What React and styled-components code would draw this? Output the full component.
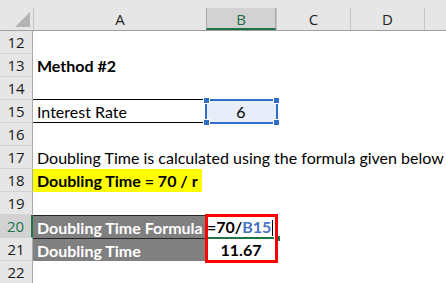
import React from 'react'
import styled, { createGlobalStyle, css } from 'styled-components'

const GlobalStyle = createGlobalStyle`
  html, body {
    margin: 0;
    padding: 0;
    background: #ffffff;
  }
  body {
    width: 446px;
    height: 283px;
    overflow: hidden;
  }
`;

const widths = { head: 33, A: 173, B: 70, C: 74, D: 74 };

const Sheet = styled.div`
  width: 446px;
  height: 283px;
  overflow: hidden;
  background: #ffffff;
  font-family: Lato, 'Liberation Sans', sans-serif;
`;

const HeaderRow = styled.div`
  display: flex;
  align-items: flex-end;
  height: 30px;
  background: #e6e6e6;
  border-bottom: 1px solid #9f9f9f;
`;

const Corner = styled.div`
  width: ${widths.head}px;
  height: 30px;
  flex: none;
  display: flex;
  align-items: flex-end;
  justify-content: flex-end;
  padding: 0 3px 3px 0;
  box-sizing: border-box;
`;

const ColHead = styled.div`
  width: ${(p) => p.$w}px;
  height: 22px;
  flex: none;
  box-sizing: border-box;
  display: flex;
  align-items: center;
  justify-content: center;
  border-left: 1px solid #c4c4c4;
  font-family: 'Open Sans', 'Noto Sans', sans-serif;
  font-size: 15px;
  color: #222;
  ${(p) =>
    p.$active &&
    css`
      background: #d2d2d2;
      color: #1e6b40;
      border-left-color: #a9a9a9;
      border-right: 1px solid #a9a9a9;
      border-bottom: 2px solid #217346;
      padding-top: 2px;
    `}
`;

const Row = styled.div`
  display: flex;
  height: 23px;
`;

const RowHead = styled.div`
  width: ${widths.head}px;
  flex: none;
  box-sizing: border-box;
  background: #e6e6e6;
  border-right: 1px solid #ababab;
  border-bottom: 1px solid #d2d2d2;
  display: flex;
  align-items: center;
  justify-content: center;
  font-family: 'Open Sans', 'Noto Sans', sans-serif;
  font-size: 15px;
  color: #1a1a1a;
  ${(p) =>
    p.$active &&
    css`
      background: #d2d2d2;
      color: #217346;
      border-right: 2px solid #217346;
    `}
`;

const Cell = styled.div`
  position: relative;
  width: ${(p) => p.$w}px;
  flex: none;
  box-sizing: border-box;
  display: flex;
  align-items: center;
  justify-content: ${(p) => (p.$center ? 'center' : 'flex-start')};
  padding: 0 4px;
  font-size: 16px;
  font-weight: ${(p) => (p.$bold ? 700 : 400)};
  color: #000;
  white-space: nowrap;
  overflow: visible;
  ${(p) =>
    p.$ruled &&
    css`
      border-top: 1px solid #000;
      border-bottom: 1px solid #000;
      margin-top: -1px;
      height: 24px;
    `}
  ${(p) =>
    p.$fill &&
    css`
      background: ${p.$fill};
    `}
  ${(p) =>
    p.$dark &&
    css`
      background: #808080;
      color: #ffffff;
      border-top: 1px solid #262626;
    `}
`;

const Highlight = styled.span`
  display: inline-block;
  background: #ffff00;
  height: 23px;
  line-height: 23px;
  width: 169px;
  margin-left: -4px;
  padding-left: 4px;
  box-sizing: border-box;
`;

const Selection = styled.div`
  position: absolute;
  left: -1px;
  top: -1px;
  right: -2px;
  bottom: -1px;
  border: 2px solid #2f6dc6;
  background: #e8eef9;
  z-index: 0;
`;

const Handle = styled.span`
  position: absolute;
  width: 5px;
  height: 5px;
  background: #2f6dc6;
  border: 1px solid #ffffff;
  ${(p) => (p.$top ? 'top: -4px;' : 'bottom: -4px;')}
  ${(p) => (p.$left ? 'left: -4px;' : 'right: -4px;')}
`;

const CellText = styled.span`
  position: relative;
  z-index: 1;
`;

const Ref = styled.span`
  color: #4472c4;
`;

const Caret = styled.span`
  display: inline-block;
  width: 1px;
  height: 16px;
  margin-left: 1px;
  vertical-align: -3px;
  background: #000;
`;

const RedBox = styled.div`
  position: absolute;
  left: -1px;
  top: -1px;
  width: 73px;
  height: 49px;
  box-sizing: border-box;
  border: 3px solid #ff0000;
  z-index: 3;
  pointer-events: none;
`;

const ActiveEdge = styled.div`
  position: absolute;
  left: 0;
  right: -2px;
  bottom: -1px;
  height: 2px;
  background: #217346;
  z-index: 2;
`;

const FillHandle = styled.span`
  position: absolute;
  right: -3px;
  top: -2px;
  width: 5px;
  height: 5px;
  background: #217346;
  border: 1px solid #fff;
`;

function CornerMark() {
  return (
    <svg width="15" height="15" viewBox="0 0 15 15">
      <polygon points="15,0 15,15 0,15" fill="#b4b4b4" />
    </svg>
  );
}

const rows = [12, 13, 14, 15, 16, 17, 18, 19, 20, 21, 22];

function renderCells(n) {
  switch (n) {
    case 13:
      return <Cell $w={widths.A} $bold>Method #2</Cell>;
    case 15:
      return (
        <>
          <Cell $w={widths.A} $ruled>Interest Rate</Cell>
          <Cell $w={widths.B} $center>
            <Selection>
              <Handle $top $left />
              <Handle $top />
              <Handle $left />
              <Handle />
            </Selection>
            <CellText>6</CellText>
          </Cell>
        </>
      );
    case 17:
      return <Cell $w={widths.A}>Doubling Time is calculated using the formula given below</Cell>;
    case 18:
      return (
        <Cell $w={widths.A} $bold>
          <Highlight>Doubling Time = 70 / r</Highlight>
        </Cell>
      );
    case 20:
      return (
        <>
          <Cell $w={widths.A} $dark $bold>Doubling Time Formula</Cell>
          <Cell $w={widths.B} $bold style={{ paddingLeft: 1 }}>
            <CellText>
              =70/<Ref>B15</Ref>
              <Caret />
            </CellText>
            <ActiveEdge>
              <FillHandle />
            </ActiveEdge>
            <RedBox />
          </Cell>
        </>
      );
    case 21:
      return (
        <>
          <Cell $w={widths.A} $dark $bold>Doubling Time</Cell>
          <Cell $w={widths.B} $bold $center>11.67</Cell>
        </>
      );
    default:
      return null;
  }
}

export default function App() {
  return (
    <>
      <GlobalStyle />
      <Sheet>
        <HeaderRow>
          <Corner>
            <CornerMark />
          </Corner>
          <ColHead $w={widths.A}>A</ColHead>
          <ColHead $w={widths.B} $active>B</ColHead>
          <ColHead $w={widths.C}>C</ColHead>
          <ColHead $w={widths.D}>D</ColHead>
          <ColHead $w={40} />
        </HeaderRow>
        {rows.map((n) => (
          <Row key={n}>
            <RowHead $active={n === 20}>{n}</RowHead>
            {renderCells(n)}
          </Row>
        ))}
      </Sheet>
    </>
  );
}
